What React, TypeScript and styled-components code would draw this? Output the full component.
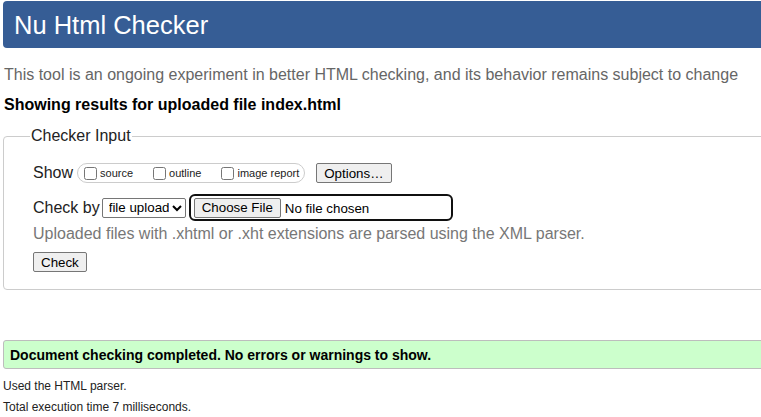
import React from "react";
import styled, { createGlobalStyle } from "styled-components";

const Global = createGlobalStyle`
  html, body { margin: 0; padding: 0; background: #fff; overflow: hidden; }
  body { font-family: "Liberation Sans", Arial, sans-serif; font-size: 16px; color: #000; }
`;

const Page = styled.div`
  width: 800px;
  padding: 1px 0 0 3px;
`;

const Header = styled.header`
  height: 47px;
  background: #365d95;
  border-radius: 4px 0 0 4px;
  display: flex;
  align-items: center;
  padding-left: 11px;
`;

const Title = styled.h1`
  margin: 0;
  font-size: 25.5px;
  font-weight: normal;
  color: #fff;
  line-height: 30px;
`;

const Tagline = styled.p`
  margin: 18px 0 0 1px;
  line-height: 18px;
  color: #666;
`;

const Showing = styled.p`
  margin: 12px 0 0 1px;
  line-height: 18px;
  font-weight: bold;
`;

const Fieldset = styled.fieldset`
  margin: 13px 0 0 0;
  padding: 0 0 17px 29px;
  border: 1px solid #ccc;
  border-radius: 4px;
  min-width: 0;
`;

const Legend = styled.legend`
  padding: 0 1px;
  margin-left: -3px;
  line-height: 18px;
  color: #222;
`;

const Row = styled.div<{ $top: number; $h: number }>`
  display: flex;
  align-items: center;
  margin-top: ${(p) => p.$top}px;
  height: ${(p) => p.$h}px;
`;

const Label = styled.span`
  color: #222;
  margin-right: 4px;
`;

const Pill = styled.span`
  display: inline-flex;
  align-items: center;
  height: 18px;
  border: 1px solid #ccc;
  border-radius: 10px;
  padding: 0 5px 0 6px;
`;

const CheckItem = styled.label<{ $last?: boolean }>`
  display: inline-flex;
  align-items: center;
  font-size: 11px;
  color: #222;
  margin-right: ${(p) => (p.$last ? 0 : 20)}px;
  input {
    margin: 0 3px 0 0;
    width: 13px;
    height: 13px;
  }
`;

const Button = styled.button<{ $ml?: number }>`
  font-family: "Liberation Sans", Arial, sans-serif;
  font-size: 13.33px;
  height: 20px;
  padding: 0 7px;
  margin-left: ${(p) => p.$ml ?? 0}px;
  border: 1px solid #767676;
  border-radius: 2px;
  background: #efefef;
  color: #000;
`;

const Select = styled.select`
  font-family: "Liberation Sans", Arial, sans-serif;
  font-size: 13.33px;
  height: 20px;
  width: 84px;
  margin-left: -2px;
  border: 1px solid #767676;
  border-radius: 2px;
  background: #fff;
  color: #000;
  padding: 0 0 0 2px;
`;

const FileBox = styled.span`
  display: inline-flex;
  align-items: center;
  margin-left: 3px;
  width: 257px;
  height: 23px;
  border: 2px solid #101010;
  border-radius: 6px;
  padding-left: 3px;
  input {
    font-family: "Liberation Sans", Arial, sans-serif;
    font-size: 13.33px;
    color: #000;
    outline: none;
  }
  input::file-selector-button {
    font-family: "Liberation Sans", Arial, sans-serif;
    font-size: 13.33px;
    height: 20px;
    padding: 0 7px;
    margin-right: 4px;
    border: 1px solid #767676;
    border-radius: 2px;
    background: #efefef;
    color: #000;
  }
`;

const Hint = styled.p`
  margin: 4px 0 0 0;
  line-height: 18px;
  color: #777;
`;

const ButtonRow = styled.div`
  margin-top: 9px;
  display: flex;
`;

const Success = styled.div`
  margin-top: 50px;
  height: 27px;
  border: 1px solid #bdbdbd;
  border-radius: 3px;
  background: #ccffcc;
  display: flex;
  align-items: center;
  padding-left: 6px;
  font-size: 14px;
  font-weight: bold;
`;

const Detail = styled.p<{ $top: number }>`
  margin: ${(p) => p.$top}px 0 0 0;
  font-size: 12px;
  line-height: 14px;
  color: #222;
`;

export default function App() {
  return (
    <>
      <Global />
      <Page>
        <Header>
          <Title>Nu Html Checker</Title>
        </Header>
        <Tagline>
          This tool is an ongoing experiment in better HTML checking, and its behavior remains subject to change
        </Tagline>
        <Showing>Showing results for uploaded file index.html</Showing>
        <Fieldset>
          <Legend>Checker Input</Legend>
          <Row $top={17} $h={22}>
            <Label>Show</Label>
            <Pill>
              <CheckItem>
                <input type="checkbox" />
                source
              </CheckItem>
              <CheckItem>
                <input type="checkbox" />
                outline
              </CheckItem>
              <CheckItem $last>
                <input type="checkbox" />
                image report
              </CheckItem>
            </Pill>
            <Button $ml={11}>Options…</Button>
          </Row>
          <Row $top={10} $h={27}>
            <Label>Check by</Label>
            <Select defaultValue="file">
              <option value="file">file upload</option>
              <option value="address">address</option>
              <option value="text">text input</option>
            </Select>
            <FileBox>
              <input type="file" />
            </FileBox>
          </Row>
          <Hint>Uploaded files with .xhtml or .xht extensions are parsed using the XML parser.</Hint>
          <ButtonRow>
            <Button>Check</Button>
          </ButtonRow>
        </Fieldset>
        <Success>Document checking completed. No errors or warnings to show.</Success>
        <Detail $top={10}>Used the HTML parser.</Detail>
        <Detail $top={7}>Total execution time 7 milliseconds.</Detail>
      </Page>
    </>
  );
}
